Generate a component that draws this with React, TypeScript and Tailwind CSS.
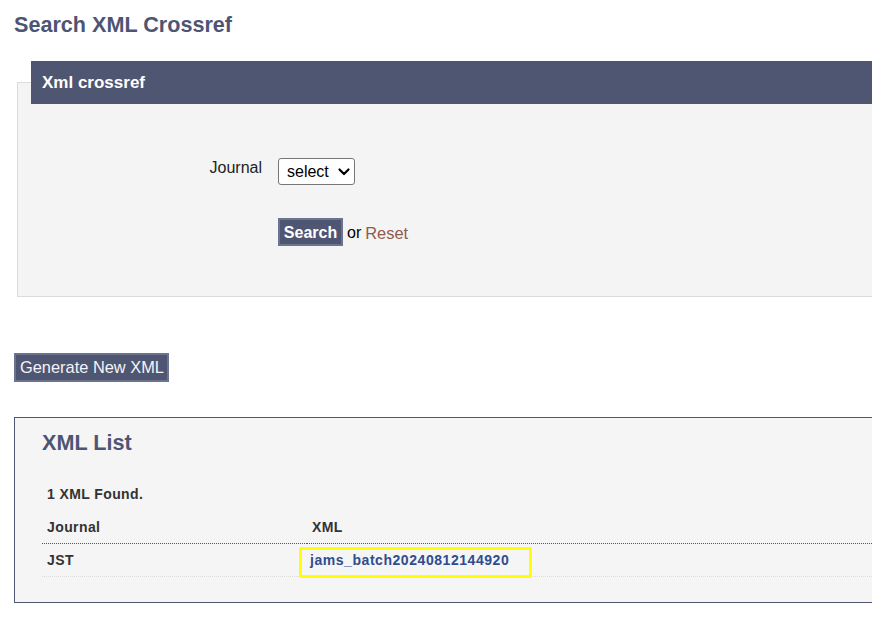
import { useState } from "react";

const SLATE = "bg-[#4f5672]";

function JournalSelect() {
  const [value, setValue] = useState("");
  return (
    <div className="relative h-[27px] w-[77px]">
      <select
        value={value}
        onChange={(e) => setValue(e.target.value)}
        className="h-full w-full appearance-none rounded-[3px] border border-[#767676] bg-white pl-[8px] pr-[22px] text-[16px] leading-[20px] text-black"
      >
        <option value="">select</option>
        <option value="jst">JST</option>
      </select>
      {/* chevron */}
      <svg
        className="pointer-events-none absolute right-[5px] top-[10px]"
        width="12"
        height="8"
        viewBox="0 0 12 8"
      >
        <polyline
          points="1.5,1.5 6,6 10.5,1.5"
          fill="none"
          stroke="#000"
          strokeWidth="2.2"
          strokeLinecap="round"
          strokeLinejoin="round"
        />
      </svg>
    </div>
  );
}

export default function App() {
  return (
    <div className="h-[624px] w-[872px] overflow-hidden bg-white font-['Liberation_Sans',Arial,sans-serif] text-[#222]">
      <div className="w-[1100px] pl-[14px]">
        <h1 className="pt-[12px] text-[21.6px] font-bold leading-[25px] text-[#4e5573]">
          Search XML Crossref
        </h1>

        {/* search form */}
        <div className="ml-[3px] mt-[45px] border border-[#dcdcdc] bg-[#f4f4f5] pb-[50px]">
          <div className={`-mt-[22px] ml-[13px] flex h-[43px] items-center pl-[11px] text-[17px] font-bold text-white ${SLATE}`}>
            Xml crossref
          </div>

          <div className="mt-[54px] grid grid-cols-[244px_1fr] gap-x-[16px]">
            <label className="text-right text-[16px] leading-[20px] text-[#222]">Journal</label>
            <JournalSelect />

            <div />
            <div className="mt-[33px] flex items-center gap-[4px] text-[16px] leading-[20px]">
              <button
                className={`flex h-[28px] w-[65px] items-center justify-center border-2 border-[#6c7390] pt-[1px] font-bold text-white ${SLATE}`}
              >
                Search
              </button>
              <span className="pt-[1px] text-black">or</span>
              <a href="#" className="pt-[1px] text-[16.4px] text-[#8f5a4c]">
                Reset
              </a>
            </div>
          </div>
        </div>

        <button
          className={`mt-[56px] flex h-[29px] w-[155px] items-center border-2 border-[#6c7390] pl-[4px] text-[16.4px] text-[#f4f4f8] ${SLATE}`}
        >
          Generate New XML
        </button>

        {/* results */}
        <div className="mt-[35px] border border-[#4f5672] bg-[#f5f5f5] pb-[25px] pl-[27px] pt-[12px]">
          <h2 className="text-[21.6px] font-bold leading-[26px] text-[#4e5573]">XML List</h2>
          <p className="mt-[28px] pl-[5px] text-[14px] font-bold leading-[20px] tracking-[0.4px] text-[#333]">
            1 XML Found.
          </p>
          <table className="mt-[7px] w-[1000px] border-collapse text-[14px] font-bold leading-[20px] tracking-[0.4px] text-[#333]">
            <thead>
              <tr className="border-b border-dotted border-[#555]">
                <th className="w-[265px] py-[6px] pl-[5px] text-left font-bold">Journal</th>
                <th className="py-[6px] pl-[5px] text-left font-bold">XML</th>
              </tr>
            </thead>
            <tbody>
              <tr className="border-b border-dotted border-[#dcdcdc]">
                <td className="py-[6px] pl-[5px]">JST</td>
                <td className="relative py-[6px] pl-[3px]">
                  <a href="#" className="tracking-[0.55px] text-[#2f4c8e]">
                    jams_batch20240812144920
                  </a>
                  <span className="pointer-events-none absolute left-[-8px] top-[3px] h-[31px] w-[233px] rounded-[2px] border-[3px] border-[#ffff00]" />
                </td>
              </tr>
            </tbody>
          </table>
        </div>
      </div>
    </div>
  );
}
